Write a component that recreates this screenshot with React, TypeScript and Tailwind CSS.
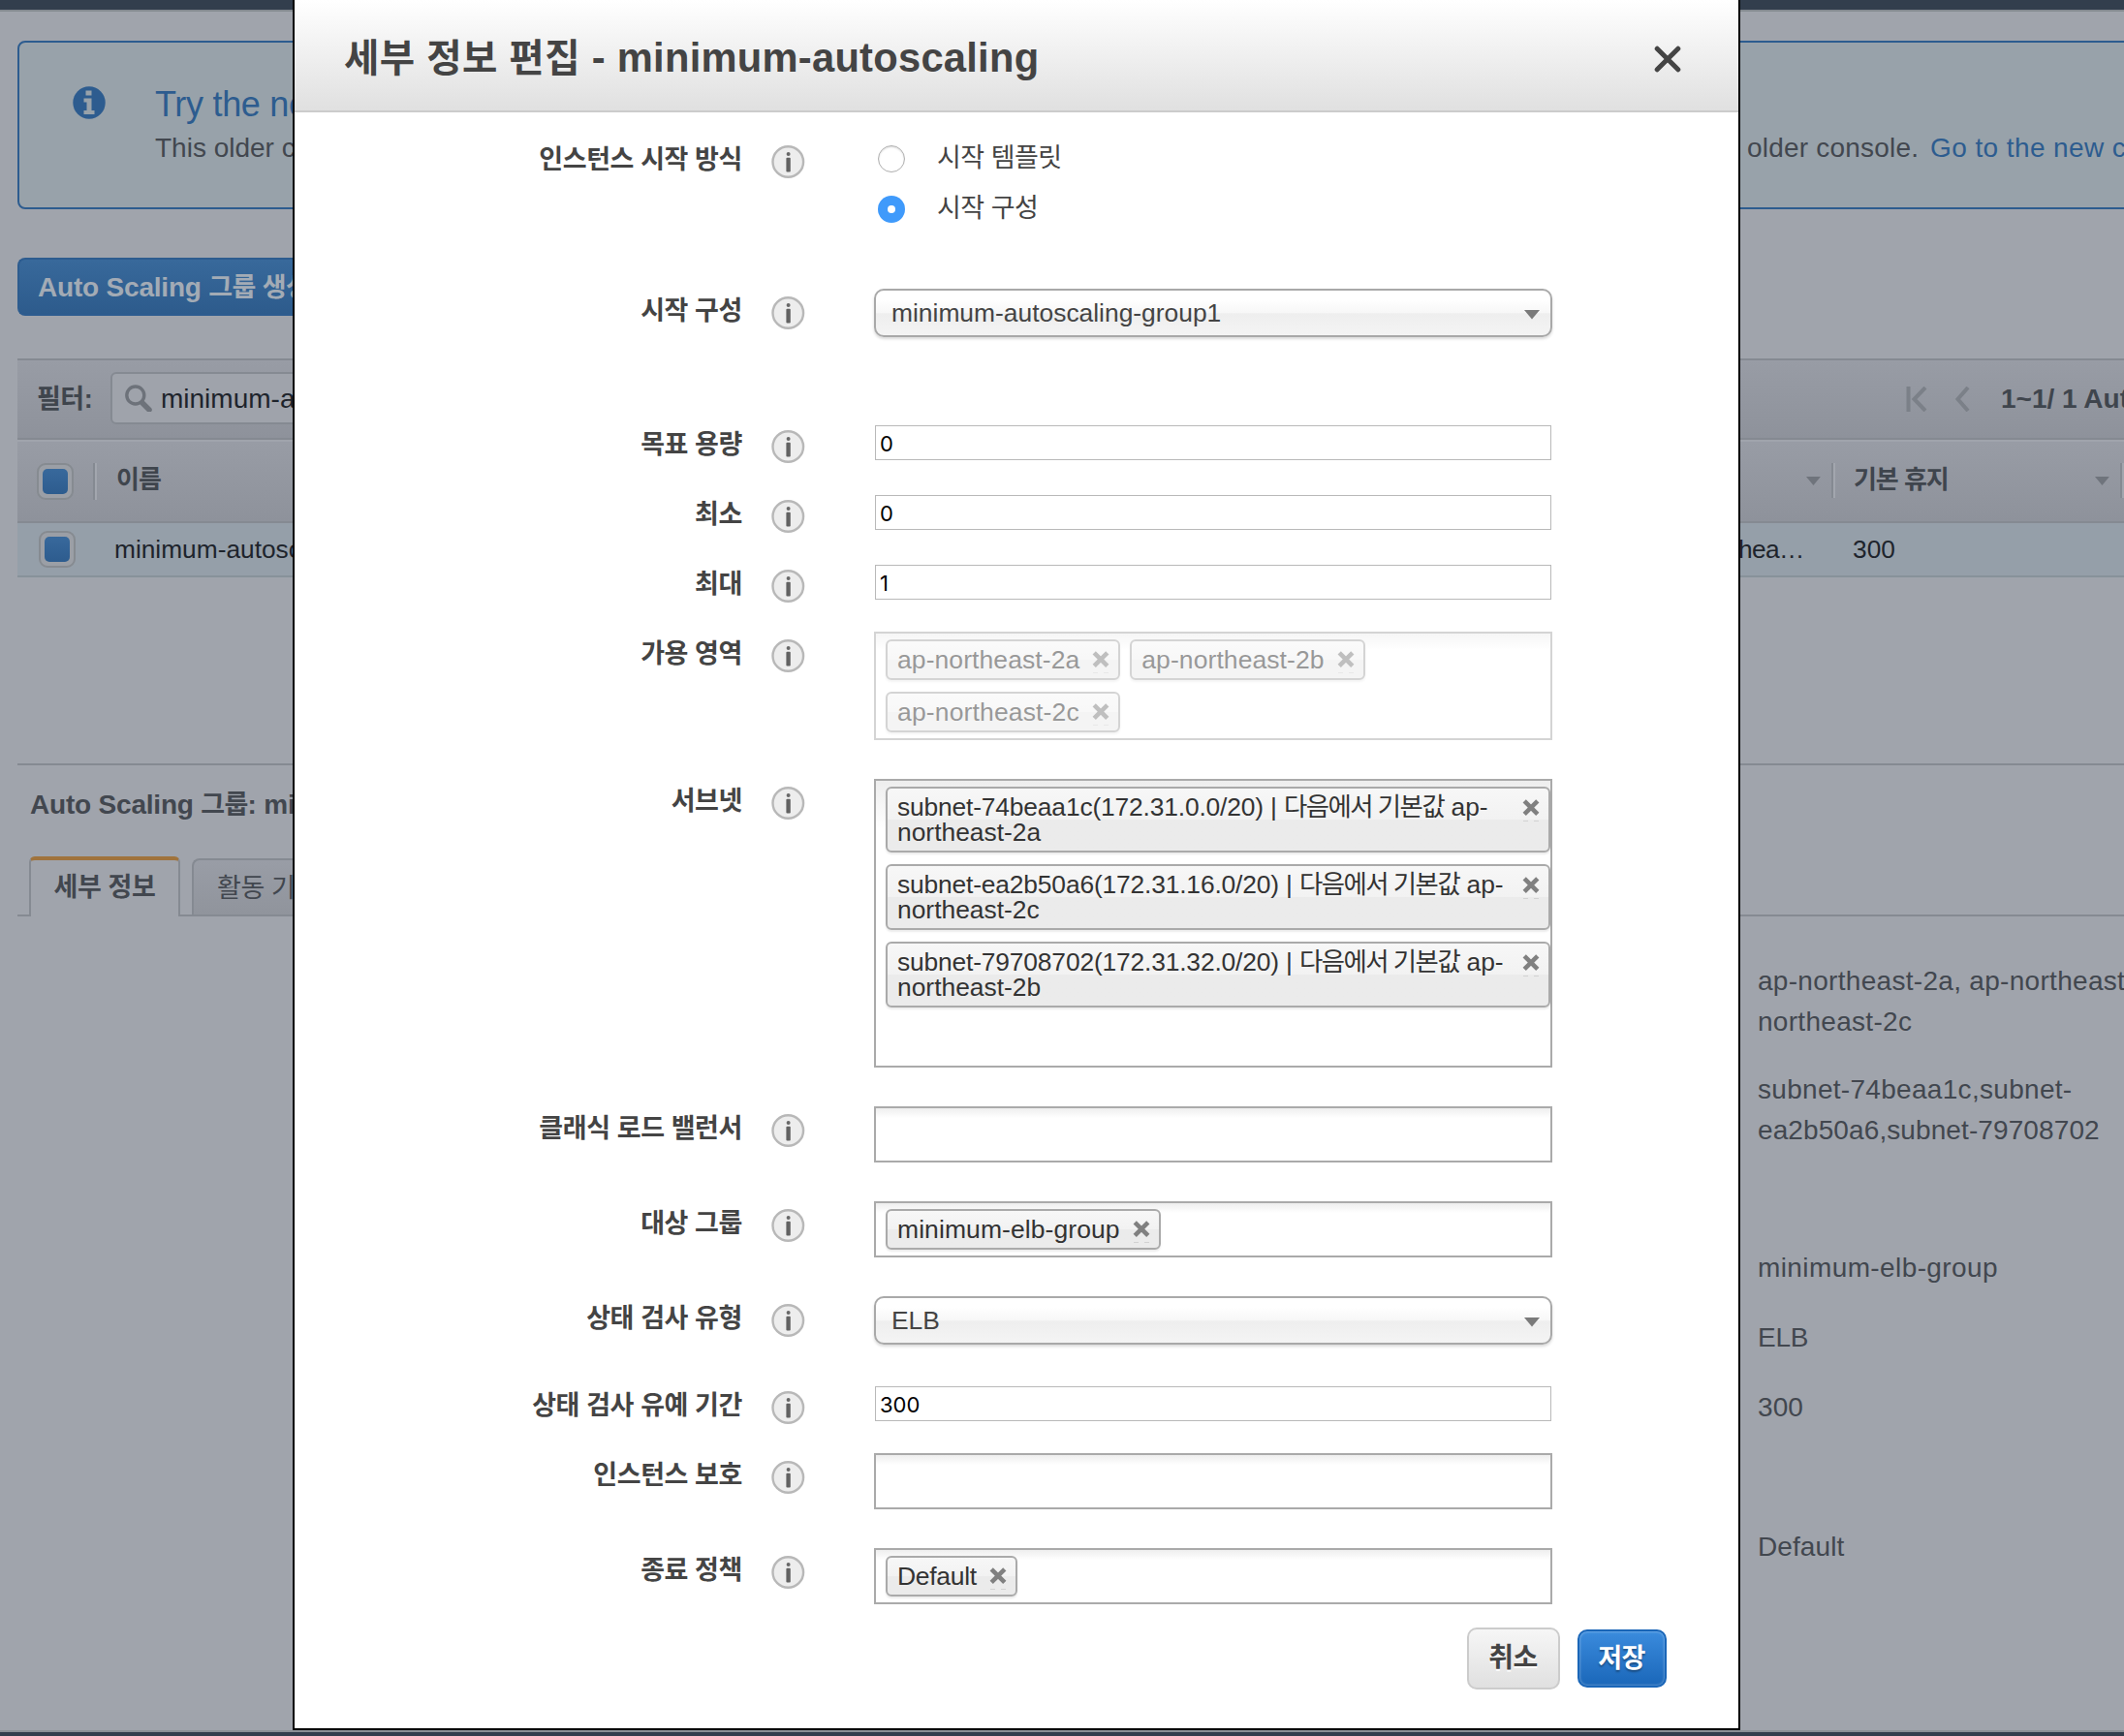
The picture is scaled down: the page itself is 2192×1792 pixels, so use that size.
import type { ReactNode } from "react";
import clsx from "clsx";

const InfoIcon = () => (
  <svg className="mt-2 ml-[30px] size-[35px] shrink-0" viewBox="0 0 35 35">
    <circle cx="17.3" cy="17" r="15.8" fill="#ededed" stroke="#b8b8b8" strokeWidth="2.4" />
    <circle cx="17.6" cy="9" r="2" fill="#686868" />
    <rect x="15.4" y="12.8" width="4.4" height="14.6" rx="1" fill="#626262" />
  </svg>
);

const RemoveIcon = ({ className }: { className?: string }) => (
  <svg className={clsx("h-6 w-[18px] shrink-0", className)} viewBox="0 0 18 24">
    <path d="M2.2 1.8 15.8 15.4M15.8 1.8 2.2 15.4" stroke="#808080" strokeWidth="4.6" />
    <path d="M1 22.5h5M12 22.5h5" stroke="#d2d2d2" strokeWidth="1" />
  </svg>
);

const Row = ({
  label,
  className,
  children,
}: {
  label: string;
  className: string;
  children: ReactNode;
}) => (
  <div className={clsx("flex items-start", className)}>
    <div className="mt-[6px] w-[462px] text-right text-[27px] leading-[34px] font-bold tracking-[-0.4px]">
      {label}
    </div>
    <InfoIcon />
    <div className="ml-[71px] w-[700px]">{children}</div>
  </div>
);

const Select = ({ value }: { value: string }) => (
  <div className="flex h-[50px] items-center justify-between rounded-[10px] border-2 border-[#a9a9a9] bg-[linear-gradient(to_bottom,#ffffff_20%,#f7f7f7_49%,#eeeeee_52%,#f4f4f4_100%)] pr-[11px] pl-4 shadow-[0_2px_3px_rgba(0,0,0,0.15)]">
    <span className="text-[26.4px] leading-[46px]">{value}</span>
    <svg className="mt-[3px] h-[10px] w-4" viewBox="0 0 16 10">
      <path d="M0 0h16L8 9.6z" fill="#7a7a7a" />
    </svg>
  </div>
);

const NumberInput = ({ value }: { value: string }) => (
  <div className="mx-px mt-[3px] h-9 border border-[#b9b9b9] bg-white pl-1 font-[Inter,sans-serif] text-[22px] leading-[36px] text-black">
    {value}
  </div>
);

const TokenBox = ({ className, children }: { className?: string; children?: ReactNode }) => (
  <div
    className={clsx(
      "flex flex-wrap content-start gap-x-[10px] gap-y-3 border-2 border-[#aaaaaa] bg-linear-to-b from-[#eeeeee] to-white bg-no-repeat pt-[6px] pl-[10px]",
      className ?? "h-[58px] bg-[length:100%_10px]",
    )}
  >
    {children}
  </div>
);

const chipStyle =
  "rounded-[6px] border-2 border-[#aaaaaa] bg-linear-to-b from-[#f7f7f7] from-0% via-[#f2f2f2] via-50% to-[#ebebeb] to-50% text-[#333333] shadow-[0_2px_2px_rgba(0,0,0,0.08)]";

const Chip = ({ text, className }: { text: string; className?: string }) => (
  <div className={clsx("flex h-[42px] items-center pr-[9px] pl-[10px]", chipStyle)}>
    <span className={clsx("text-[26.5px] leading-[38px]", className ?? "tracking-[0.08px]")}>{text}</span>
    <RemoveIcon className="mt-[6px] ml-[13px]" />
  </div>
);

const SubnetChip = ({ id, korean, zone }: { id: string; korean: string; zone: string }) => (
  <div className={clsx("flex h-[68px] w-[686px] justify-between pt-[6px] pr-[9px] pl-[10px]", chipStyle)}>
    <div className="text-[26.4px] leading-[26px] whitespace-nowrap">
      <span className="tracking-[-0.17px]">{id} | </span>
      <span className="tracking-[-1.5px]">{korean}</span> ap-
      <br />
      northeast-{zone}
    </div>
    <RemoveIcon className="mt-[5px]" />
  </div>
);

const EditDialog = () => (
  <div className="absolute top-0 left-[302px] h-[1786px] w-[1494px] border-2 border-t-0 border-black bg-white text-[#444444]">
    <div className="flex h-[116px] items-center justify-between border-b-2 border-[#cccccc] bg-linear-to-b from-white to-[#e0e0e0] pr-[59px] pl-[51px]">
      <h1 className="mt-[6px] text-[41.7px] leading-[60px] font-bold tracking-[0.25px]">
        <span className="text-[39.5px] tracking-[0.5px]">세부 정보 편집</span> - minimum-autoscaling
      </h1>
      <svg className="mt-[7px] size-7" viewBox="0 0 28 28">
        <path d="M3.2 3.2 24.8 24.8M24.8 3.2 3.2 24.8" stroke="#444444" strokeWidth="5" strokeLinecap="round" />
      </svg>
    </div>

    <div className="pt-[26px]">
      <Row label="인스턴스 시작 방식" className="h-[156px]">
        <div className="flex h-[52px] items-start pl-1">
          <span className="mt-2 size-7 rounded-full border border-[#b0b0b0] bg-white shadow-[inset_0_1px_2px_rgba(0,0,0,0.15)]" />
          <span className="ml-[33px] text-[27px] leading-[43px] tracking-[-0.5px]">시작 템플릿</span>
        </div>
        <div className="flex h-[52px] items-start pl-1">
          <span className="mt-2 flex size-7 items-center justify-center rounded-full bg-[#3f9afb]">
            <span className="size-2 rounded-full bg-white" />
          </span>
          <span className="ml-[33px] text-[27px] leading-[43px] tracking-[-0.5px]">시작 구성</span>
        </div>
      </Row>
      <Row label="시작 구성" className="h-[138px]">
        <Select value="minimum-autoscaling-group1" />
      </Row>
      <Row label="목표 용량" className="h-[72px]">
        <NumberInput value="0" />
      </Row>
      <Row label="최소" className="h-[72px]">
        <NumberInput value="0" />
      </Row>
      <Row label="최대" className="h-[72px]">
        <NumberInput value="1" />
      </Row>
      <Row label="가용 영역" className="h-[152px]">
        <TokenBox className="h-28 bg-[length:100%_16px] opacity-50">
          <Chip text="ap-northeast-2a" />
          <Chip text="ap-northeast-2b" />
          <Chip text="ap-northeast-2c" className="tracking-[0.15px]" />
        </TokenBox>
      </Row>
      <Row label="서브넷" className="h-[338px]">
        <TokenBox className="h-[298px] bg-[length:100%_50px]">
          <SubnetChip id="subnet-74beaa1c(172.31.0.0/20)" korean="다음에서 기본값" zone="2a" />
          <SubnetChip id="subnet-ea2b50a6(172.31.16.0/20)" korean="다음에서 기본값" zone="2c" />
          <SubnetChip id="subnet-79708702(172.31.32.0/20)" korean="다음에서 기본값" zone="2b" />
        </TokenBox>
      </Row>
      <Row label="클래식 로드 밸런서" className="h-[98px]">
        <TokenBox />
      </Row>
      <Row label="대상 그룹" className="h-[98px]">
        <TokenBox>
          <Chip text="minimum-elb-group" />
        </TokenBox>
      </Row>
      <Row label="상태 검사 유형" className="h-[90px]">
        <Select value="ELB" />
      </Row>
      <Row label="상태 검사 유예 기간" className="h-[72px]">
        <NumberInput value="300" />
      </Row>
      <Row label="인스턴스 보호" className="h-[98px]">
        <TokenBox />
      </Row>
      <Row label="종료 정책" className="h-[82px]">
        <TokenBox>
          <Chip text="Default" className="tracking-[-0.3px]" />
        </TokenBox>
      </Row>
    </div>

    <div className="flex items-center justify-end gap-[18px] pr-[74px] text-[28px] font-bold tracking-[-0.5px]">
      <button className="h-16 w-24 rounded-[10px] border-2 border-[#cccccc] bg-linear-to-b from-[#f6f6f6] to-[#e0e0e0] pr-px [text-shadow:0_2px_0_#fff]">
        취소
      </button>
      <button className="h-[60px] w-[92px] rounded-[10px] border-2 border-[#1a66b8] bg-linear-to-b from-[#3a8bdd] to-[#1a67b9] pt-px pr-px text-[27px] text-white shadow-[inset_0_0_3px_rgba(255,255,255,0.5)] [text-shadow:0_2px_2px_rgba(0,0,0,0.35)]">
        저장
      </button>
    </div>
  </div>
);

const Checkbox = ({ className }: { className: string }) => (
  <span
    className={clsx(
      "flex size-[38px] items-center justify-center rounded-[9px] border-2 border-[#868b91] bg-[#9b9fa6]",
      className,
    )}
  >
    <span className="size-[26px] rounded-[5px] bg-linear-to-b from-[#38699c] to-[#2d5c8e]" />
  </span>
);

const Caret = ({ className }: { className: string }) => (
  <svg className={clsx("h-[9px] w-[15px]", className)} viewBox="0 0 15 9">
    <path d="M0 0h15L7.5 9z" fill="#6f747c" />
  </svg>
);

const Separator = ({ className }: { className: string }) => (
  <span className={clsx("w-1 border-r-2 border-l-2 border-r-[#a2a6ae] border-l-[#858a92]", className)} />
);

const barStyle = "ml-[18px] flex bg-linear-to-b from-[#989ca5] to-[#8e929b] text-[#3f454d]";

const ConsolePage = () => (
  <div className="h-[1792px] w-[2192px] overflow-hidden whitespace-nowrap text-[28px] text-[#42474f]">
    <div className="h-3 border-b-2 border-[#858b91] bg-[#323e4d]" />

    {/* New console banner */}
    <div className="mt-[30px] ml-[18px] flex h-[174px] w-[2240px] justify-between rounded-[8px] border-2 border-[#2d5c8f] bg-[#98a2aa]">
      <div className="flex w-[284px] overflow-hidden">
        <svg className="mt-[45px] ml-[55px] size-[34px] shrink-0" viewBox="0 0 34 34">
          <circle cx="17" cy="17" r="16.7" fill="#2d5c8f" />
          <path d="M13.5 4.5h6v5h-6zM11.5 12.5h8v12.5h3v4h-11v-4h3v-8.5h-3z" fill="#98a2aa" />
        </svg>
        <div className="ml-[51px]">
          <div className="mt-[38px] text-[36px] leading-[51px] tracking-[-0.3px] text-[#2d5c8f]">Try the new console</div>
          <div className="leading-[40px]">This older console</div>
        </div>
      </div>
      <div className="mt-[89px] w-[453px] leading-[40px] tracking-[0.2px]">
        older console. <span className="ml-1 tracking-[0.4px] text-[#2d5c8f]">Go to the new console</span>
      </div>
    </div>

    <div className="mt-[50px] ml-[18px] h-[60px] w-[284px] overflow-hidden rounded-l-[8px] border-2 border-r-0 border-[#2d5c8f] bg-linear-to-b from-[#38699b] to-[#2d5b8c] pl-[19px] text-[28px] leading-[57px] font-bold tracking-[-0.2px] text-[#a3abb5]">
      Auto Scaling <span className="text-[27px] tracking-[-0.6px]">그룹 생성</span>
    </div>

    {/* Filter bar */}
    <div className={clsx("mt-11 h-[84px] justify-between border-t-2 border-b-2 border-[#858a92]", barStyle)}>
      <div className="flex w-[284px] overflow-hidden">
        <span className="ml-5 w-[76px] shrink-0 text-[27px] leading-[81px] font-bold tracking-[-0.5px]">필터:</span>
        <div className="mt-3 flex h-[54px] w-60 shrink-0 items-center rounded-[6px] border-2 border-[#858a92] bg-[#9fa3ab] pl-[13px]">
          <svg className="size-7 shrink-0" viewBox="0 0 28 28" fill="none" stroke="#6d727a">
            <circle cx="10.8" cy="11" r="9" strokeWidth="3.4" />
            <path d="M18 19l7 7" strokeWidth="5.5" strokeLinecap="round" />
          </svg>
          <span className="mt-0.5 ml-[9px] text-[#1e242c]">minimum-autoscaling</span>
        </div>
      </div>
      <div className="flex w-[388px] items-center overflow-hidden pl-[163px]">
        <svg className="h-[26px] w-[66px] shrink-0" viewBox="0 0 66 26" fill="none" stroke="#7b8088" strokeWidth="4">
          <path d="M2.5 0v26M20 1 8.5 13 20 25M64 1 53.5 13 64 25" />
        </svg>
        <span className="ml-[32px] leading-[80px] font-bold">1~1/ 1 Auto Scaling</span>
      </div>
    </div>

    {/* Table header */}
    <div className={clsx("h-[86px] justify-between border-t-2 border-b-2 border-t-[#a0a4ac] border-b-[#858a92]", barStyle)}>
      <div className="flex">
        <Checkbox className="mt-[22px] ml-5" />
        <Separator className="mt-[22px] ml-5 h-[38px]" />
        <span className="ml-[20px] text-[26px] leading-[78px] font-bold tracking-[-1px]">이름</span>
      </div>
      <div className="flex w-[388px] overflow-hidden">
        <Caret className="mt-9 ml-[60px]" />
        <Separator className="mt-[22px] ml-[11px] h-[36px]" />
        <span className="ml-[19px] w-[251px] text-[26px] leading-[78px] font-bold tracking-[-1px]">기본 휴지</span>
        <Caret className="mt-9" />
        <Separator className="mt-[22px] ml-[11px] h-[36px] shrink-0" />
      </div>
    </div>
    <div className="ml-[18px] flex h-14 justify-between border-b-2 border-[#87929a] bg-[#959fa9] text-[26.3px] leading-[54px] text-[#1e242c]">
      <div className="flex w-[284px] overflow-hidden">
        <Checkbox className="mt-2 ml-[22px] shrink-0" />
        <span className="ml-[40px]">minimum-autoscaling</span>
      </div>
      <div className="flex w-[398px] overflow-hidden">
        <span className="w-[118px] tracking-[-0.6px]">hea…</span>
        <span>300</span>
      </div>
    </div>

    {/* Details pane */}
    <div className="mt-48 ml-[18px] h-[94px] border-t-2 border-[#858a92]">
      <div className="w-[284px] overflow-hidden pl-[13px] leading-[81px] font-bold tracking-[-0.2px]">
        Auto Scaling <span className="text-[27px] tracking-[-0.7px]">그룹</span>: minimum
      </div>
    </div>
    <div className="ml-[18px] flex h-[64px] text-[27px] tracking-[-0.4px]">
      <div className="w-3 border-b-2 border-[#858a92]" />
      <div className="mt-0.5 w-[156px] rounded-t-[6px] border-t-4 border-r-2 border-l-2 border-t-[#a0733c] border-r-[#858a92] border-l-[#858a92] text-center leading-[57px] font-bold">
        세부 정보
      </div>
      <div className="w-3 border-b-2 border-[#858a92]" />
      <div className="mt-1 w-[104px] overflow-hidden rounded-tl-[8px] border-2 border-r-0 border-[#858a92] bg-linear-to-b from-[#999da6] to-[#90949c] pl-[24px] leading-[58px]">
        활동 기록
      </div>
      <div className="flex-1 border-b-2 border-[#858a92]" />
    </div>
    <div className="ml-[1814px] w-[378px] overflow-hidden pt-[46px] leading-[42px] tracking-[0.1px]">
      <div className="tracking-[0.3px]">
        ap-northeast-2a, ap-northeast
        <br />
        northeast-2c
      </div>
      <div className="mt-7">
        <span className="tracking-[0.3px]">subnet-74beaa1c,subnet-</span>
        <br />
        ea2b50a6,subnet-79708702
      </div>
      <div className="mt-[100px] tracking-[0.4px]">minimum-elb-group</div>
      <div className="mt-[30px] tracking-[-0.3px]">ELB</div>
      <div className="mt-[30px]">300</div>
      <div className="mt-[102px]">Default</div>
    </div>
  </div>
);

const App = () => (
  <div className="relative h-[1792px] w-[2192px] overflow-hidden bg-[#a0a4ac] font-['Liberation_Sans','Noto_Sans_CJK_KR',sans-serif]">
    <ConsolePage />
    <div className="absolute bottom-0 left-0 h-[6px] w-full border-t-2 border-[#8a9096] bg-[#323e4d]" />
    <EditDialog />
  </div>
);

export default App;
